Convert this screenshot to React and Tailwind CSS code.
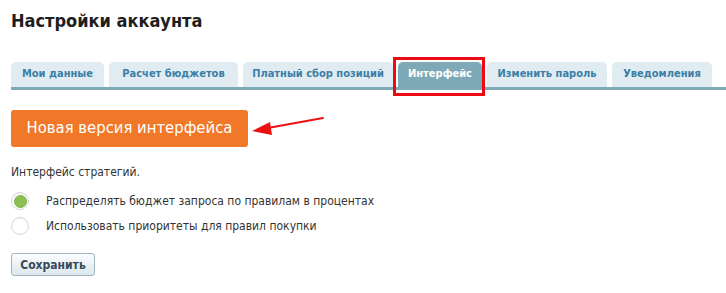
import React from "react";

const TABS = [
  { label: "Мои данные", w: "w-[93px]" },
  { label: "Расчет бюджетов", w: "w-[129px]" },
  { label: "Платный сбор позиций", w: "w-[150px]" },
  { label: "Интерфейс", w: "w-[84px]", active: true },
  { label: "Изменить пароль", w: "w-[120px]" },
  { label: "Уведомления", w: "w-[100px]" },
];

function Radio({ checked, children }) {
  return (
    <label className="flex items-center h-[24px] cursor-pointer">
      <span className="w-[18px] h-[18px] rounded-full border border-[#d9d9d9] bg-white flex items-center justify-center shrink-0 shadow-[inset_0_1px_1px_rgba(0,0,0,0.06)]">
        {checked && <span className="w-[13px] h-[13px] rounded-full bg-[#8cc152] border border-[#7cb342]" />}
      </span>
      <span className="ml-[17px] text-[12px] text-[#333]">{children}</span>
    </label>
  );
}

export default function App() {
  return (
    <div className="relative w-[726px] h-[293px] bg-white pl-[11px] pt-[8px] font-['DejaVu_Sans_Condensed','DejaVu_Sans',Tahoma,sans-serif] overflow-hidden">
      <h1 className="text-[18px] leading-[26px] font-bold text-[#1e1e1e]">Настройки аккаунта</h1>

      {/* Tabs */}
      <div className="mt-[28px] flex items-end">
        {TABS.map((t, i) => (
          <div
            key={t.label}
            className={`${t.w} ${i > 0 ? "ml-[5px]" : ""} h-[25px] rounded-t-[5px] flex items-center justify-center text-[11px] font-bold whitespace-nowrap ${
              t.active ? "bg-[#7eaab8] text-white" : "bg-[#e1ecf2] text-[#3b7ea6]"
            }`}
          >
            {t.label}
          </div>
        ))}
      </div>
      <div className="h-[3px] bg-[#7eaab8]" />

      {/* Annotation box */}
      <div className="absolute left-[393px] top-[57px] w-[92px] h-[39px] border-[3px] border-[#ec0b12]" />

      <div className="mt-[20px] flex items-start">
        <button className="w-[237px] h-[37px] rounded-[3px] bg-[#f07828] text-white text-[16.5px] font-['DejaVu_Sans_Condensed','Liberation_Sans',Arial,sans-serif]">
          Новая версия интерфейса
        </button>
        <svg className="ml-[3px] mt-[6px]" width="74" height="22" viewBox="0 0 74 22">
          <line x1="14" y1="12.5" x2="72" y2="2" stroke="#ee1111" strokeWidth="2" strokeLinecap="round" />
          <polygon points="1,15 19,6 21,19" fill="#ee1111" />
        </svg>
      </div>

      <p className="mt-[17px] text-[12px] text-[#333] leading-[16px]">Интерфейс стратегий.</p>

      <div className="mt-[9px] flex flex-col gap-[1px]">
        <Radio checked>Распределять бюджет запроса по правилам в процентах</Radio>
        <Radio>Использовать приоритеты для правил покупки</Radio>
      </div>

      <button className="mt-[15px] w-[84px] h-[23px] rounded-[3px] border border-[#9fb5c0] bg-gradient-to-b from-[#fbfdfe] to-[#dce7ed] text-[12px] font-bold text-[#35495a]">
        Сохранить
      </button>
    </div>
  );
}
